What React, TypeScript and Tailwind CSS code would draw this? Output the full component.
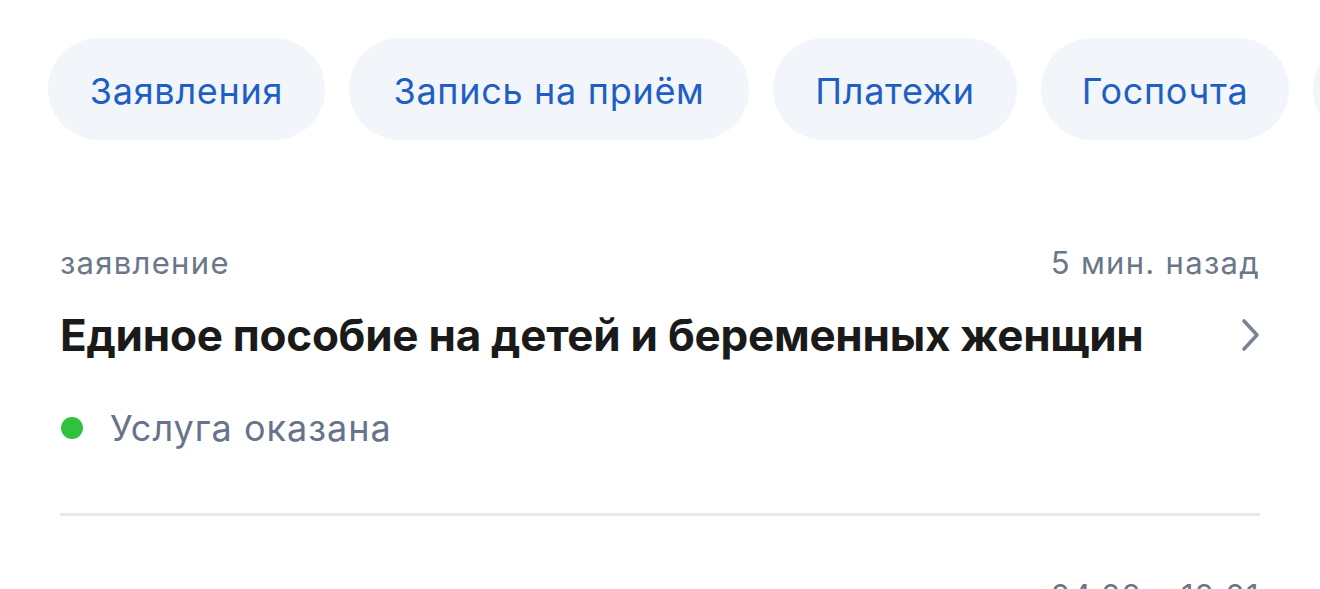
const tabs = [
  { label: "Заявления", w: "w-[277px]" },
  { label: "Запись на приём", w: "w-[400px]" },
  { label: "Платежи", w: "w-[244px]" },
  { label: "Госпочта", w: "w-[248px]" },
  { label: "Документы", w: "w-[260px]" },
];

const Chevron = () => (
  <svg width="22" height="34" viewBox="0 0 22 34" fill="none" className="-mr-[2px]">
    <path
      d="M4 3 L17 17 L4 31"
      stroke="#7b8494"
      strokeWidth="3.6"
      strokeLinecap="round"
      strokeLinejoin="round"
    />
  </svg>
);

const App = () => {
  return (
    <div className="w-[1320px] h-[589px] overflow-hidden bg-white font-['Inter',_sans-serif]">
      <div className="flex gap-[24px] pl-[48px] pt-[38px]">
        {tabs.map((t) => (
          <div
            key={t.label}
            className={`${t.w} shrink-0 h-[102px] pt-[3px] rounded-full bg-[#f2f5fa] flex items-center justify-center text-[36px] text-[#1f5fc4] tracking-[0.7px] whitespace-nowrap`}
          >
            {t.label}
          </div>
        ))}
      </div>

      <div className="px-[60px]">
        <div className="pt-[103px] pb-[60px] border-b-[3px] border-[#e6e9ed]">
          <div className="flex justify-between items-center h-[40px] text-[31px] text-[#6b7789] tracking-[1.3px]">
            <span>заявление</span>
            <span>5 мин. назад</span>
          </div>
          <div className="flex justify-between items-center mt-[22px] h-[60px]">
            <span className="text-[44px] font-bold text-[#1a1a1a] tracking-[-0.25px]">
              Единое пособие на детей и беременных женщин
            </span>
            <Chevron />
          </div>
          <div className="flex items-center gap-[27px] mt-[38px] h-[50px] pl-[1px]">
            <span className="w-[22px] h-[22px] rounded-full bg-[#2ec23f]" />
            <span className="text-[36px] text-[#66738a] tracking-[1px]">Услуга оказана</span>
          </div>
        </div>
        <div className="flex justify-end items-center h-[40px] mt-[60px] text-[31px] text-[#6b7789] tracking-[1.3px]">
          <span>04.02 в 12:01</span>
        </div>
      </div>
    </div>
  );
};

export default App;
